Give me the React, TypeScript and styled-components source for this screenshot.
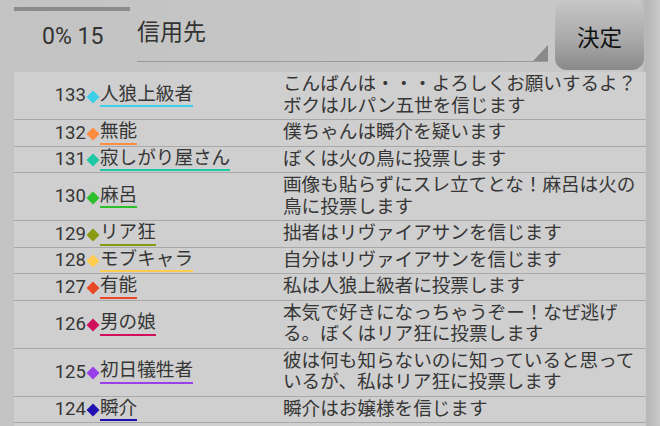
import React from "react";
import styled, { createGlobalStyle } from "styled-components";

// 投票ログ
interface Vote {
  no: number;
  name: string;
  color: string;
  message: string;
}

const votes: Vote[] = [
  { no: 133, name: "人狼上級者", color: "#3ccfe8", message: "こんばんは・・・よろしくお願いするよ？\nボクはルパン五世を信じます" },
  { no: 132, name: "無能", color: "#ff8c40", message: "僕ちゃんは瞬介を疑います" },
  { no: 131, name: "寂しがり屋さん", color: "#1dc9a5", message: "ぼくは火の鳥に投票します" },
  { no: 130, name: "麻呂", color: "#2cc02c", message: "画像も貼らずにスレ立てとな！麻呂は火の\n鳥に投票します" },
  { no: 129, name: "リア狂", color: "#8a9a10", message: "拙者はリヴァイアサンを信じます" },
  { no: 128, name: "モブキャラ", color: "#ffcc50", message: "自分はリヴァイアサンを信じます" },
  { no: 127, name: "有能", color: "#e84a28", message: "私は人狼上級者に投票します" },
  { no: 126, name: "男の娘", color: "#d0105a", message: "本気で好きになっちゃうぞー！なぜ逃げ\nる。ぼくはリア狂に投票します" },
  { no: 125, name: "初日犠牲者", color: "#9940e8", message: "彼は何も知らないのに知っていると思って\nいるが、私はリア狂に投票します" },
  { no: 124, name: "瞬介", color: "#2010b0", message: "瞬介はお嬢様を信じます" },
  { no: 123, name: "", color: "transparent", message: "" },
];

const GlobalStyle = createGlobalStyle`
  body {
    margin: 0;
    background: linear-gradient(to right, #c3c3c3 0, #c8c8c8 640px, #b6b6b6 646px, #c9c9c9 660px);
    font-family: Roboto, "Noto Sans CJK JP", sans-serif;
    color: #363636;
  }
`;

const Page = styled.div`
  width: 660px;
  height: 426px;
  overflow: hidden;
`;

const Header = styled.div`
  display: flex;
  height: 72px;
  padding: 0 16px 0 14px;
`;

const CounterBox = styled.div`
  width: 116px;
  display: flex;
  flex-direction: column;
`;

const Progress = styled.div`
  margin-top: 7px;
  height: 4px;
  background: #8c8c8c;
`;

const Counter = styled.div`
  margin-top: 13px;
  padding-left: 28px;
  font-family: Roboto, sans-serif;
  font-size: 23px;
  line-height: 26px;
  color: #333;
`;

const Spinner = styled.div`
  position: relative;
  flex: 1;
  margin: 0 7px 10px 7px;
  padding-top: 19px;
  border-bottom: 1px solid #9a9a9a;
  font-size: 23px;
  line-height: 28px;
  color: #333;

  &::after {
    content: "";
    position: absolute;
    right: 0;
    bottom: 0;
    width: 0;
    height: 0;
    border-left: 15px solid transparent;
    border-bottom: 16px solid #8a8a8a;
  }
`;

const DecideButton = styled.button`
  width: 89px;
  height: 69px;
  margin-top: 1px;
  border: none;
  border-radius: 12px;
  background: linear-gradient(to bottom, #c6c6c6 0%, #aaaaaa 55%, #898989 100%);
  font-family: Roboto, "Noto Sans CJK JP", sans-serif;
  font-size: 22.5px;
  color: #111;
  padding: 0;
`;

const Table = styled.div`
  margin: 0 14px;
  background: #cfcfcf;
`;

const Row = styled.div`
  display: grid;
  grid-template-columns: 72px 14px 183px 1fr;
  align-items: center;
  padding: 1px 0;
  border-bottom: 1px solid #a9a9a9;
  font-size: 18.6px;
  line-height: 21.5px;
`;

const No = styled.div`
  text-align: right;
  font-family: Roboto, sans-serif;
  padding-top: 1px;
`;

const Diamond = styled.svg`
  display: block;
  width: 16px;
  height: 16px;
  margin: 2px -1px 0 -1px;
`;

const NameCell = styled.div`
  display: flex;
`;

const Name = styled.span<{ $line: string }>`
  border-bottom: 2px solid ${(p) => p.$line};
`;

const Message = styled.div`
  padding: 1px 0;
  min-height: 21.5px;
  white-space: pre-line;
`;

const App = () => {
  return (
    <>
      <GlobalStyle />
      <Page>
        <Header>
          <CounterBox>
            <Progress />
            <Counter>0% 15</Counter>
          </CounterBox>
          <Spinner>信用先</Spinner>
          <DecideButton>決定</DecideButton>
        </Header>
        <Table>
          {votes.map((v) => (
            <Row key={v.no}>
              <No>{v.name ? v.no : "\u00a0"}</No>
              <Diamond width="16" height="16" viewBox="0 0 16 16">
                <path d="M8 1.5 L14.5 8 L8 14.5 L1.5 8 Z" fill={v.color} />
              </Diamond>
              <NameCell>
                <Name $line={v.color}>{v.name}</Name>
              </NameCell>
              <Message>{v.message}</Message>
            </Row>
          ))}
        </Table>
      </Page>
    </>
  );
};

export default App;
